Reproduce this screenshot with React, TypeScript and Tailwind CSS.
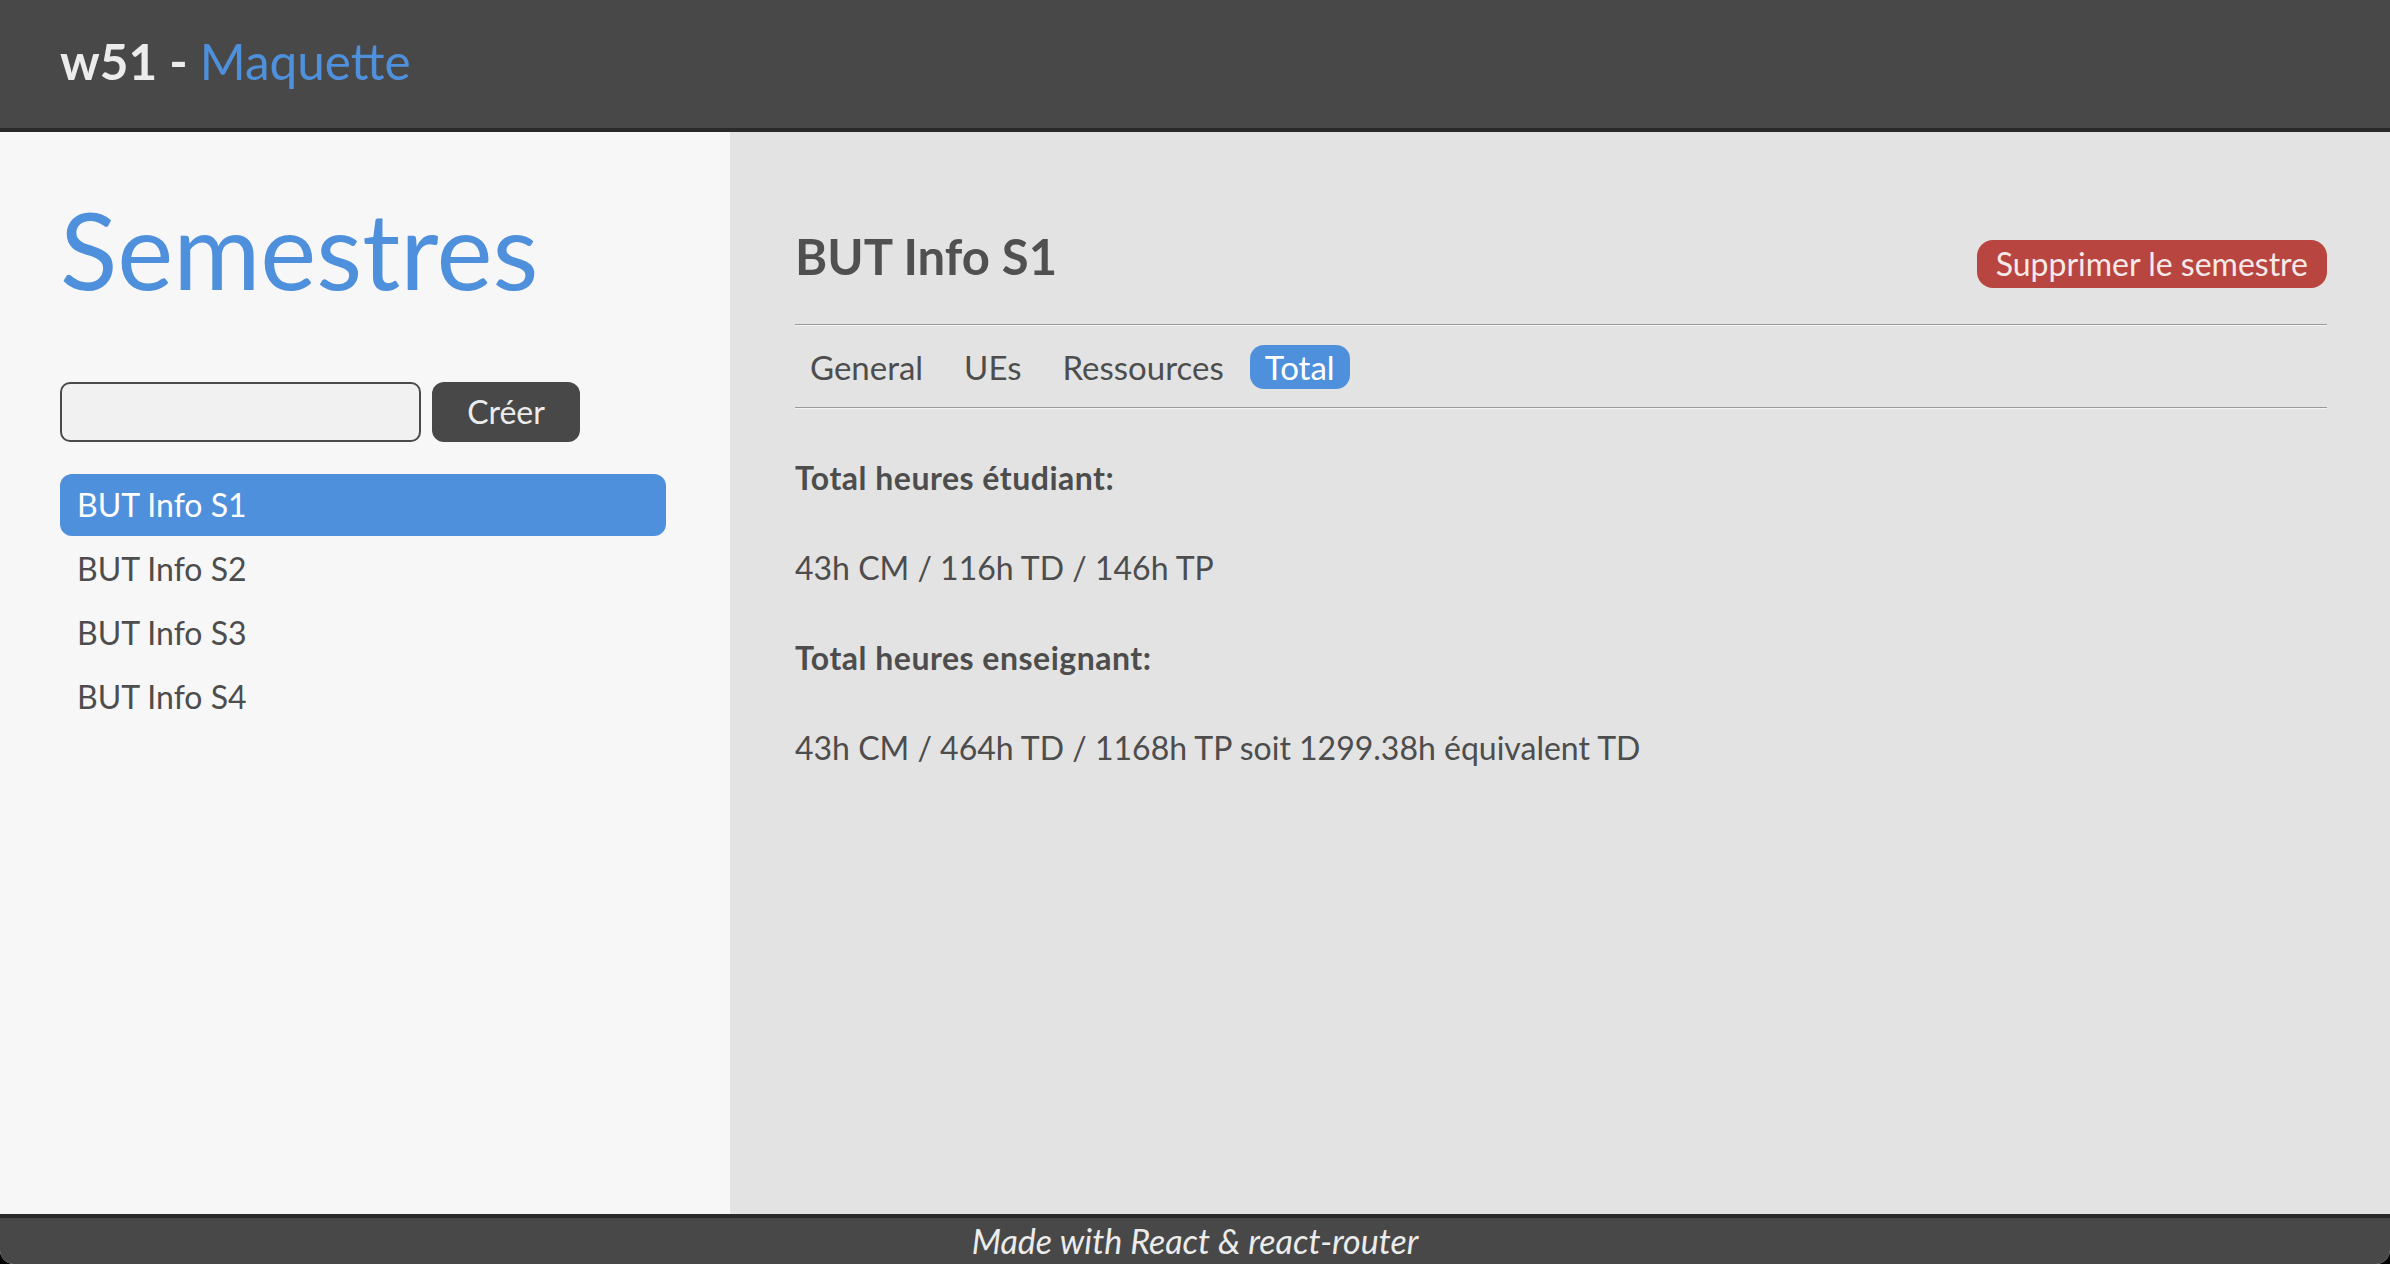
import { useState } from 'react'

const semestres = ['BUT Info S1', 'BUT Info S2', 'BUT Info S3', 'BUT Info S4']
const tabs = ['General', 'UEs', 'Ressources', 'Total']

export default function App() {
  const [selected, setSelected] = useState(0)
  const [tab, setTab] = useState('Total')
  const [name, setName] = useState('')

  return (
    <div className="h-screen w-full bg-black font-['Lato','Noto_Sans',sans-serif] text-[#4d4d4d]">
      <div className="flex h-full flex-col overflow-hidden rounded-b-[14px] bg-[#e3e3e3]">
        <header className="flex h-[132px] shrink-0 items-center border-b-4 border-[#2a2a2a] bg-[#484848] px-[60px] pb-[4px]">
          <h1 className="text-[49.5px] leading-none">
            <span className="font-bold text-[#ececec]">w51 - </span>
            <span className="text-[#4f90dc]">Maquette</span>
          </h1>
        </header>

        <div className="flex min-h-0 flex-1">
          <aside className="w-[730px] shrink-0 bg-[#f7f7f7] pl-[60px] pr-[64px] pt-[64px]">
            <h2 className="text-[106px] leading-none text-[#4f90dc]">Semestres</h2>

            <div className="mt-[80px] flex gap-[11px]">
              <input
                value={name}
                onChange={(e) => setName(e.target.value)}
                className="h-[60px] w-[361px] rounded-[10px] border-2 border-[#4a4a4a] bg-[#f1f1f1] px-3 text-[28px] outline-none"
              />
              <button className="h-[60px] w-[148px] rounded-[12px] bg-[#484848] text-[32px] text-[#ececec]">
                Créer
              </button>
            </div>

            <ul className="mt-[32px] flex flex-col gap-[2px]">
              {semestres.map((s, i) => (
                <li key={s}>
                  <button
                    onClick={() => setSelected(i)}
                    className={`flex h-[62px] w-full items-center rounded-[12px] px-[17px] text-left text-[32px] ${
                      i === selected ? 'bg-[#4f90dc] text-white' : 'text-[#4d4d4d]'
                    }`}
                  >
                    {s}
                  </button>
                </li>
              ))}
            </ul>
          </aside>

          <main className="flex-1 pl-[65px] pr-[63px] pt-[100px]">
            <div className="flex items-start justify-between">
              <h2 className="text-[49px] font-bold leading-none text-[#505050]">
                {semestres[selected]}
              </h2>
              <button className="mt-[8px] h-[48px] rounded-[16px] bg-[#b8453f] px-[19px] text-[32px] leading-none text-[#f6e9e9]">
                Supprimer le semestre
              </button>
            </div>

            <div className="mt-[36px] border-t border-b border-t-[#9a9a9a] border-b-[#f4f4f4]" />
            <nav className="flex gap-[11px] pt-[19px] pb-[18px]">
              {tabs.map((t) => (
                <button
                  key={t}
                  onClick={() => setTab(t)}
                  className={`h-[44px] rounded-[14px] px-[15px] text-[33px] leading-[44px] ${
                    t === tab ? 'bg-[#4f90dc] text-white' : 'text-[#4d4d4d]'
                  }`}
                >
                  {t}
                </button>
              ))}
            </nav>
            <div className="border-t border-b border-t-[#9a9a9a] border-b-[#f4f4f4]" />

            <div className="mt-[53px] flex flex-col gap-[58px] text-[32px] leading-none">
              <p className="font-bold tracking-[0.5px]">Total heures étudiant:</p>
              <p>43h CM / 116h TD / 146h TP</p>
              <p className="font-bold tracking-[0.5px]">Total heures enseignant:</p>
              <p>43h CM / 464h TD / 1168h TP soit 1299.38h équivalent TD</p>
            </div>
          </main>
        </div>

        <footer className="h-[50px] shrink-0 border-t-4 border-[#2a2a2a] bg-[#484848] text-center text-[34px] italic leading-[46px] text-[#ececec]">
          Made with React &amp; react-router
        </footer>
      </div>
    </div>
  )
}
